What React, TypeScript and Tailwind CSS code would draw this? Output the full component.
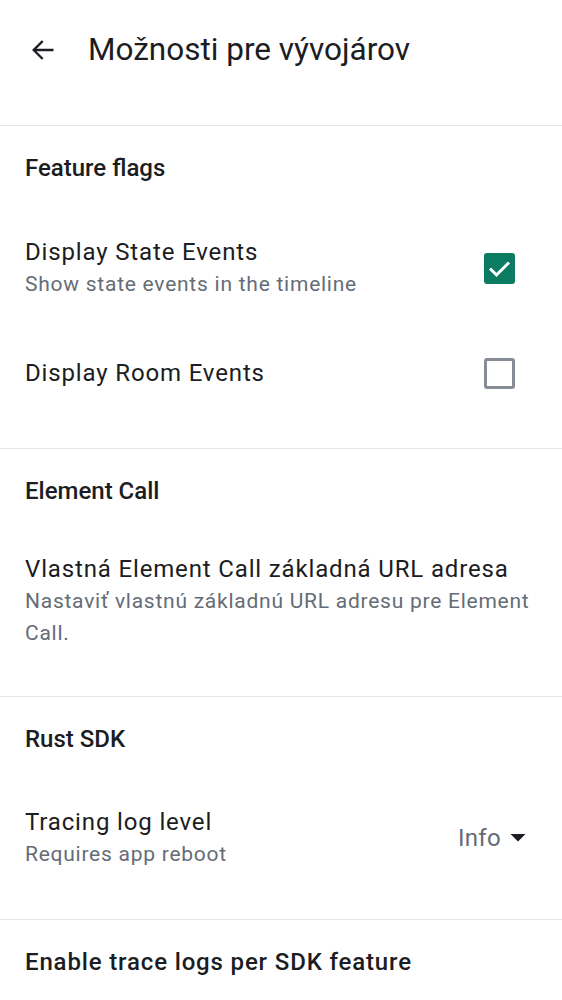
import React from "react";

const Divider = ({ mt }: { mt: string }) => <div className={`${mt} h-px bg-[#e7e7e9]`} />;

function Checkbox({ checked }: { checked: boolean }) {
  if (checked) {
    return (
      <div className="w-[31px] h-[31px] rounded-[3px] bg-[#0b7b61]">
        <svg width="31" height="31" viewBox="0 0 31 31" fill="none">
          <path d="M6 15.5l6.5 6.5L25 9.5" stroke="white" strokeWidth="3" strokeLinecap="butt" />
        </svg>
      </div>
    );
  }
  return <div className="w-[31px] h-[31px] rounded-[3px] border-[3px] border-[#868c96] bg-white" />;
}

export default function App() {
  return (
    <div className="w-[562px] h-[1000px] bg-white overflow-hidden text-[#1b1d22]" style={{ fontFamily: "Roboto, 'Noto Sans', sans-serif" }}>
      <div className="h-[125px] pb-[25px] flex items-center">
        <div className="ml-[29px] w-[28px] flex items-center">
          <svg width="28" height="28" viewBox="0 0 24 24" fill="none">
            <path d="M20 12H4.5M11 5l-7 7 7 7" stroke="#1b1d22" strokeWidth="2" strokeLinecap="square" />
          </svg>
        </div>
        <div className="ml-[31px] text-[31.5px] leading-[40px] font-normal">Možnosti pre vývojárov</div>
      </div>
      <div className="h-px bg-[#e7e7e9]" />

      <div className="mt-[28px] px-[25px] text-[24px] leading-[28px] font-medium">Feature flags</div>

      <div className="mt-[54px] px-[25px] flex items-center">
        <div className="flex-1">
          <div className="text-[24px] leading-[32px] tracking-[0.85px]">Display State Events</div>
          <div className="text-[21px] leading-[32px] tracking-[0.75px] text-[#656c76]">Show state events in the timeline</div>
        </div>
        <div className="mr-[22px]"><Checkbox checked /></div>
      </div>

      <div className="mt-[57px] px-[25px] flex items-center">
        <div className="flex-1">
          <div className="text-[24px] leading-[32px] tracking-[0.85px]">Display Room Events</div>
        </div>
        <div className="mr-[22px]"><Checkbox checked={false} /></div>
      </div>

      <Divider mt="mt-[59px]" />
      <div className="mt-[28px] px-[25px] text-[24px] leading-[28px] font-medium">Element Call</div>

      <div className="mt-[48px] pl-[25px] pr-[16px]">
        <div className="text-[24px] leading-[32px] tracking-[0.85px]">Vlastná Element Call základná URL adresa</div>
        <div className="text-[21px] leading-[32px] tracking-[0.75px] text-[#656c76]">Nastaviť vlastnú základnú URL adresu pre Element Call.</div>
      </div>

      <Divider mt="mt-[47px]" />
      <div className="mt-[28px] px-[25px] text-[24px] leading-[28px] font-medium">Rust SDK</div>

      <div className="mt-[53px] px-[25px] flex items-center">
        <div className="flex-1">
          <div className="text-[24px] leading-[32px] tracking-[0.85px]">Tracing log level</div>
          <div className="text-[21px] leading-[32px] tracking-[0.75px] text-[#656c76]">Requires app reboot</div>
        </div>
        <div className="flex items-center mr-[11px]">
          <span className="text-[24px] leading-[32px] tracking-[0.3px] text-[#656c76]">Info</span>
          <svg className="ml-[9px]" width="16" height="10" viewBox="0 0 16 10">
            <path d="M0.5 1h15L8 8.5z" fill="#1b1d22" />
          </svg>
        </div>
      </div>

      <Divider mt="mt-[49px]" />
      <div className="mt-[28px] px-[25px] text-[24px] leading-[28px] font-medium tracking-[0.85px]">Enable trace logs per SDK feature</div>
    </div>
  );
}
